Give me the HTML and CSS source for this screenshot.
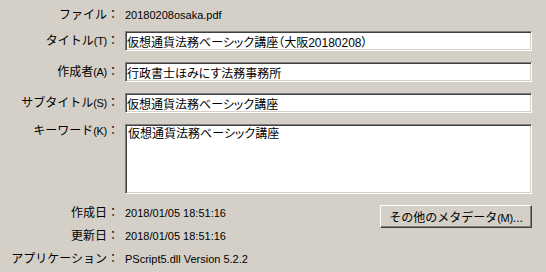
FILE: index.html
```html
<!DOCTYPE html>
<html lang="ja">
<head>
    <meta charset="UTF-8">
    <title>文書のプロパティ</title>
    <link rel="stylesheet" href="styles.css">
</head>
<body>
    <div class="panel">
        <div class="fields">
            <div class="row row-file">
                <span class="label">ファイル：</span>
                <span class="value">20180208osaka.pdf</span>
            </div>
            <div class="row">
                <label class="label" for="f-title">タイトル<span class="key">(T)</span>：</label>
                <input class="box" id="f-title" type="text" value="仮想通貨法務ベーシック講座（大阪20180208）" readonly>
            </div>
            <div class="row">
                <label class="label" for="f-author">作成者<span class="key">(A)</span>：</label>
                <input class="box" id="f-author" type="text" value="行政書士ほみにす法務事務所" readonly>
            </div>
            <div class="row">
                <label class="label" for="f-subject">サブタイトル<span class="key">(S)</span>：</label>
                <input class="box" id="f-subject" type="text" value="仮想通貨法務ベーシック講座" readonly>
            </div>
            <div class="row row-keywords">
                <label class="label" for="f-keywords">キーワード<span class="key">(K)</span>：</label>
                <textarea class="box area" id="f-keywords" readonly>仮想通貨法務ベーシック講座</textarea>
            </div>
        </div>

        <div class="bottom">
            <div class="info">
                <div class="row row-info">
                    <span class="label">作成日：</span>
                    <span class="value">2018/01/05 18:51:16</span>
                </div>
                <div class="row row-info">
                    <span class="label">更新日：</span>
                    <span class="value">2018/01/05 18:51:16</span>
                </div>
                <div class="row row-info">
                    <span class="label">アプリケーション：</span>
                    <span class="value">PScript5.dll Version 5.2.2</span>
                </div>
            </div>
            <button class="btn" type="button">その他のメタデータ<span class="key">(M)</span>...</button>
        </div>
    </div>
</body>
</html>
```

FILE: styles.css
```css
body {
    margin: 0;
    background-color: #d4d0c8;
    color: #000;
    font-family: "Liberation Sans", "Noto Sans CJK JP", sans-serif;
    font-size: 12px;
}
.panel {
    width: 546px;
    height: 272px;
    box-sizing: border-box;
    padding: 5px 14px 0 0;
}
.fields {
    display: flex;
    flex-direction: column;
    gap: 11px;
}
.row {
    display: flex;
    align-items: center;
    height: 20px;
}
.row-file {
    margin-bottom: -5px;
}
.label {
    flex: 0 0 119px;
    padding-right: 6px;
    text-align: right;
    white-space: nowrap;
    line-height: 14px;
}
.key {
    font-size: 11px;
    letter-spacing: -0.3px;
}
.value {
    font-size: 11px;
    white-space: nowrap;
}
.box {
    flex: 1;
    height: 20px;
    box-sizing: border-box;
    margin: 0;
    padding: 1px 1px 0;
    border: 1px solid;
    border-color: #808080 #ffffff #ffffff #808080;
    box-shadow: inset 1px 1px #404040, inset -1px -1px #d4d0c8;
    background-color: #fff;
    color: #000;
    font: inherit;
    font-size: 12px;
    font-feature-settings: "palt";
    outline: none;
}
.row-keywords {
    align-items: flex-start;
    height: 70px;
}
.area {
    height: 70px;
    resize: none;
    line-height: 14px;
    padding: 2px 2px 0;
    overflow: hidden;
}
.bottom {
    display: flex;
    align-items: flex-start;
    justify-content: space-between;
    margin-top: 7px;
}
.row-info {
    height: 23px;
}
.btn {
    width: 152px;
    height: 23px;
    margin-top: 4px;
    padding: 0;
    border: 1px solid;
    border-color: #ffffff #404040 #404040 #ffffff;
    box-shadow: inset -1px -1px #808080;
    background-color: #d4d0c8;
    color: #000;
    font: inherit;
    font-size: 12px;
}
```
